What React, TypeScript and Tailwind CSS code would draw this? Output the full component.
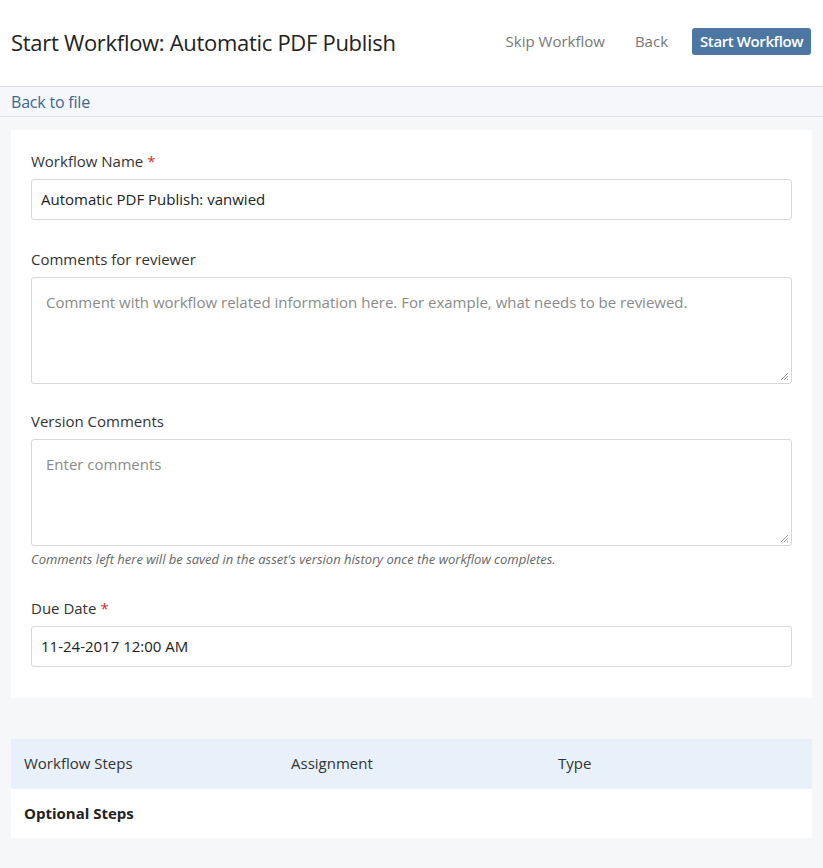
import React from "react";

const font = { fontFamily: '"Open Sans", "Noto Sans", sans-serif' };

function Resize() {
  return (
    <svg className="absolute right-[2px] bottom-[2px]" width="10" height="10" viewBox="0 0 10 10">
      <path d="M9 2 L2 9 M9 5 L5 9 M9 8 L8 9" stroke="#9a9a9a" strokeWidth="1" />
    </svg>
  );
}

function Label({ text, required }: { text: string; required?: boolean }) {
  return (
    <div className="text-[15px] leading-[20px] text-[#333] mb-[8px]">
      {text}
      {required && <span className="text-[#d0312d] ml-[4px]">*</span>}
    </div>
  );
}

export default function App() {
  return (
    <div className="min-h-[868px] bg-[#f5f7f9] text-[#333]" style={font}>
      <div className="h-[87px] bg-white border-b border-[#dde1e6] flex items-center justify-between pl-[11px] pr-[12px]">
        <h1 className="text-[22px] text-[#222] tracking-[-0.3px] pb-[1px]">Start Workflow: Automatic PDF Publish</h1>
        <div className="flex items-center text-[15px] mb-[4px]">
          <span className="text-[#777] mr-[30px]">Skip Workflow</span>
          <span className="text-[#777] mr-[24px]">Back</span>
          <button className="bg-[#4c77a2] text-white h-[27px] px-[8px] rounded-[3px] text-[15px] font-semibold tracking-[-0.4px]">
            Start Workflow
          </button>
        </div>
      </div>
      <div className="h-[30px] bg-[#f5f7fa] border-b border-[#dde1e6] flex items-center pl-[11px]">
        <span className="text-[#3c6792] text-[16px] tracking-[-0.2px]">Back to file</span>
      </div>
      <div className="px-[11px] pt-[13px]">
        <div className="bg-white px-[20px] pt-[21px] pb-[31px]">
          <Label text="Workflow Name" required />
          <div className="h-[41px] border border-[#d9d9d9] rounded-[3px] flex items-center px-[9px] text-[15px] text-[#222]">
            Automatic PDF Publish: vanwied
          </div>
          <div className="mt-[29px]">
            <Label text="Comments for reviewer" />
            <div className="relative h-[107px] border border-[#d9d9d9] rounded-[3px] px-[14px] pt-[13px] text-[15px] text-[#8a8a8a]">
              Comment with workflow related information here. For example, what needs to be reviewed.
              <Resize />
            </div>
          </div>
          <div className="mt-[27px]">
            <Label text="Version Comments" />
            <div className="relative h-[107px] border border-[#d9d9d9] rounded-[3px] px-[14px] pt-[13px] text-[15px] text-[#8a8a8a]">
              Enter comments
              <Resize />
            </div>
            <div className="mt-[4px] text-[13px] italic text-[#666]">
              Comments left here will be saved in the asset's version history once the workflow completes.
            </div>
          </div>
          <div className="mt-[28px]">
            <Label text="Due Date" required />
            <div className="h-[41px] border border-[#d9d9d9] rounded-[3px] flex items-center px-[9px] text-[15px] text-[#222]">
              11-24-2017 12:00 AM
            </div>
          </div>
        </div>
        <div className="mt-[41px]">
          <div className="h-[50px] bg-[#e8f1f9] grid grid-cols-[267px_267px_1fr] items-center pl-[13px] text-[15px] text-[#333]">
            <span>Workflow Steps</span>
            <span>Assignment</span>
            <span>Type</span>
          </div>
          <div className="h-[49px] bg-white flex items-center pl-[13px] text-[15px] font-bold text-[#222]">
            Optional Steps
          </div>
        </div>
      </div>
    </div>
  );
}
